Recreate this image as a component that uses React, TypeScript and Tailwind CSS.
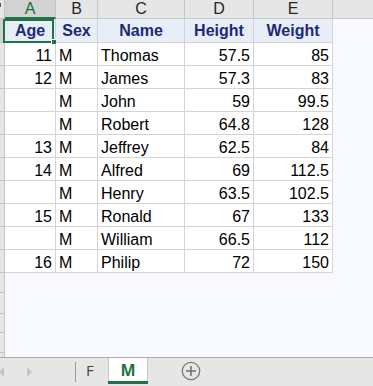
import React from "react";

const cols = [
  { w: "w-[51px]", letter: "A" },
  { w: "w-[42px]", letter: "B" },
  { w: "w-[87px]", letter: "C" },
  { w: "w-[69px]", letter: "D" },
  { w: "w-[79px]", letter: "E" },
];

const rows: (string | number)[][] = [
  [11, "M", "Thomas", 57.5, 85],
  [12, "M", "James", 57.3, 83],
  ["", "M", "John", 59, 99.5],
  ["", "M", "Robert", 64.8, 128],
  [13, "M", "Jeffrey", 62.5, 84],
  [14, "M", "Alfred", 69, 112.5],
  ["", "M", "Henry", 63.5, 102.5],
  [15, "M", "Ronald", 67, 133],
  ["", "M", "William", 66.5, 112],
  [16, "M", "Philip", 72, 150],
];

const headers = ["Age", "Sex", "Name", "Height", "Weight"];
const numeric = [true, false, false, true, true];

const stripRows = [24, 23, 23, 23, 23, 23, 23, 23, 23, 23, 23, 20, 21, 19, 20, 20];

export default function App() {
  return (
    <div
      className="w-[373px] h-[386px] flex flex-col bg-[#f7f9fe] overflow-hidden"
      style={{ fontFamily: '"Liberation Sans", Arial, sans-serif' }}
    >
      {/* column letters */}
      <div className="flex h-[19px] shrink-0 bg-[#e6e6e6]">
        <div className="w-[5px] border-r border-b border-[#c6c6c6] relative">
          <div className="absolute left-0 top-[3px] w-[1px] h-[4px] bg-[#217346]" />
        </div>
        {cols.map((c, i) => (
          <div
            key={c.letter}
            className={`${c.w} flex items-center justify-center border-r border-[#c6c6c6] text-[16px] leading-[18px] ${
              i === 0
                ? "bg-[#d2d2d2] text-[#1e6b41] border-b-2 border-b-[#217346]"
                : "text-[#262626] border-b"
            }`}
          >
            {c.letter}
          </div>
        ))}
        <div className="flex-1 border-b border-[#c6c6c6]" />
      </div>

      {/* body */}
      <div className="flex flex-1 min-h-0">
        <div className="w-[5px] shrink-0 flex flex-col bg-[#e6e6e6] border-r border-[#c6c6c6]">
          {stripRows.map((h, i) => (
            <div
              key={i}
              className={`shrink-0 border-b border-[#c6c6c6] ${i === 0 ? "bg-[#d2d2d2]" : ""}`}
              style={{ height: h }}
            />
          ))}
        </div>
        <div className="flex flex-col">
          {/* header row */}
          <div className="flex h-[24px]">
            {headers.map((h, i) => (
              <div
                key={h}
                className={`${cols[i].w} relative flex items-center justify-center bg-[#e8eef7] border-r border-b border-[#d4d4d4] text-[16px] leading-[18px] font-bold text-[#1c2a78]`}
              >
                {h}
                {i === 0 && (
                  <div className="absolute left-[-2px] top-0 w-[51px] h-[24px] border-2 border-[#217346] pointer-events-none">
                    <div className="absolute right-[-5px] bottom-[-4px] w-[6px] h-[6px] bg-[#217346] border border-white" />
                  </div>
                )}
              </div>
            ))}
          </div>
          {rows.map((r, ri) => (
            <div key={ri} className="flex h-[23px]">
              {r.map((v, ci) => (
                <div
                  key={ci}
                  className={`${cols[ci].w} flex items-end bg-white border-r border-b border-[#d4d4d4] text-[16px] leading-[18px] text-black ${
                    numeric[ci] ? "justify-end pr-[3px]" : "justify-start pl-[3px]"
                  }`}
                >
                  {v}
                </div>
              ))}
            </div>
          ))}
        </div>
      </div>

      {/* sheet tabs */}
      <div className="h-[29px] shrink-0 flex items-stretch bg-[#e6e6e6] border-t border-[#ababab] relative">
        <div className="w-[75px] flex items-center">
          <svg width="6" height="10" viewBox="0 0 6 10" className="ml-[-1px]">
            <path d="M5 0 L0 5 L5 10 Z" fill="#c4c4c4" />
          </svg>
          <svg width="6" height="10" viewBox="0 0 6 10" className="ml-[22px]">
            <path d="M0 0 L5 5 L0 10 Z" fill="#c4c4c4" />
          </svg>
        </div>
        <div className="w-[1px] bg-[#9a9a9a] my-[4px]" />
        <div className="w-[32px] flex items-start justify-start pl-[10px] pt-[3px] text-[15px] leading-[18px] text-[#444]" style={{ fontFamily: '"Open Sans", "Liberation Sans", sans-serif' }}>
          F
        </div>
        <div className="w-[40px] h-[26px] bg-white border-x border-[#c6c6c6] flex flex-col">
          <div className="flex-1 flex items-start justify-center pt-[3px] text-[16px] leading-[18px] font-bold text-[#217346]" style={{ fontFamily: '"Open Sans", "Liberation Sans", sans-serif' }}>
            M
          </div>
          <div className="h-[3px] bg-[#217346] mx-[-1px]" />
        </div>
        <div className="flex items-center ml-[33px] pb-[2px]">
          <svg width="20" height="20" viewBox="0 0 20 20">
            <circle cx="10" cy="10" r="8.7" fill="none" stroke="#7a7a7a" strokeWidth="1.3" />
            <path d="M10 5 V15 M5 10 H15" stroke="#6e6e6e" strokeWidth="1.5" />
          </svg>
        </div>
      </div>
    </div>
  );
}
